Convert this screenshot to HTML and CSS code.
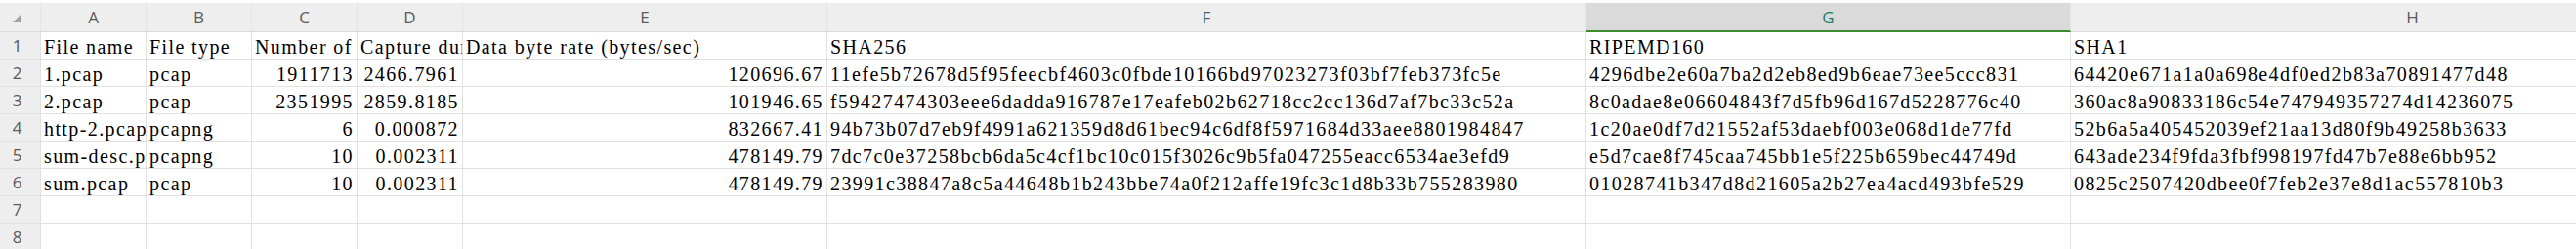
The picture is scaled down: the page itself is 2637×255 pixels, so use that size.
FILE: index.html
```html
<!DOCTYPE html>
<html lang="en">
<head>
  <meta charset="UTF-8">
  <title>capinfos - overzicht</title>
  <link rel="stylesheet" href="styles.css">
</head>
<body>
  <!-- WERKBLAD -->
  <div id="blad" class="blad"></div>

  <script>
    const kolommen = ["A","B","C","D","E","F","G","H"];
    const actieveKolom = "G";

    const rijen = [
      ["File name","File type","Number of packets","Capture duration (seconds)","Data byte rate (bytes/sec)","SHA256","RIPEMD160","SHA1"],
      ["1.pcap","pcap",1911713,"2466.7961","120696.67","11efe5b72678d5f95feecbf4603c0fbde10166bd97023273f03bf7feb373fc5e","4296dbe2e60a7ba2d2eb8ed9b6eae73ee5ccc831","64420e671a1a0a698e4df0ed2b83a70891477d48"],
      ["2.pcap","pcap",2351995,"2859.8185","101946.65","f59427474303eee6dadda916787e17eafeb02b62718cc2cc136d7af7bc33c52a","8c0adae8e06604843f7d5fb96d167d5228776c40","360ac8a90833186c54e747949357274d14236075"],
      ["http-2.pcapng","pcapng",6,"0.000872","832667.41","94b73b07d7eb9f4991a621359d8d61bec94c6df8f5971684d33aee8801984847","1c20ae0df7d21552af53daebf003e068d1de77fd","52b6a5a405452039ef21aa13d80f9b49258b3633"],
      ["sum-desc.pcapng","pcapng",10,"0.002311","478149.79","7dc7c0e37258bcb6da5c4cf1bc10c015f3026c9b5fa047255eacc6534ae3efd9","e5d7cae8f745caa745bb1e5f225b659bec44749d","643ade234f9fda3fbf998197fd47b7e88e6bb952"],
      ["sum.pcap","pcap",10,"0.002311","478149.79","23991c38847a8c5a44648b1b243bbe74a0f212affe19fc3c1d8b33b755283980","01028741b347d8d21605a2b27ea4acd493bfe529","0825c2507420dbee0f7feb2e37e8d1ac557810b3"]
    ];
    const legeRijen = 3;

    // Getallen rechts uitlijnen, zoals in een rekenblad
    function isGetal(w) {
      return typeof w === "number" || /^\d+(\.\d+)?$/.test(w);
    }

    function toonBlad() {
      // Kolomkoppen
      let html = `<div class="rij kop"><div class="cel hoek"><div class="driehoek"></div></div>`;
      html += kolommen.map(k => `<div class="cel${k === actieveKolom ? ' actief' : ''}">${k}</div>`).join('');
      html += `</div>`;

      // Rijen met gegevens
      rijen.forEach((rij, i) => {
        html += `<div class="rij"><div class="cel nr">${i + 1}</div>`;
        html += rij.map(w => `<div class="cel${isGetal(w) ? ' getal' : ''}">${w}</div>`).join('');
        html += `</div>`;
      });

      // Lege rijen onderaan
      for (let i = 0; i < legeRijen; i++) {
        html += `<div class="rij"><div class="cel nr">${rijen.length + i + 1}</div>`;
        html += kolommen.map(() => `<div class="cel"></div>`).join('');
        html += `</div>`;
      }

      document.getElementById("blad").innerHTML = html;
    }

    toonBlad();
  </script>
</body>
</html>
```

FILE: styles.css
```css
body {
  margin: 0;
  background: #fff;
  overflow: hidden;
  font-family: "Liberation Serif", "Times New Roman", serif;
  color: #000;
}
.blad {
  padding-top: 3px;
  width: 2820px;
}
.rij {
  display: grid;
  grid-template-columns: 42px 108px 108px 108px 108px 373px 777px 496px 700px;
  height: 28px;
}
.cel {
  border-right: 1px solid #e2e2e2;
  border-bottom: 1px solid #e2e2e2;
  padding: 3px 3px 0 3px;
  font-size: 20px;
  line-height: 24px;
  letter-spacing: 1.4px;
  white-space: nowrap;
  overflow: hidden;
}
.cel.getal {
  text-align: right;
  padding-right: 3px;
}

/* kolomkoppen en rijnummers */
.kop { height: 30px; }
.kop .cel {
  background: #eeeeee;
  border-right-color: #e4e4e4;
  border-bottom-color: #d9d9d9;
  padding: 0;
  font-family: "Open Sans", "Noto Sans", sans-serif;
  font-size: 17px;
  line-height: 30px;
  letter-spacing: 0;
  color: #5a5a5a;
  text-align: center;
}
.kop .cel.actief {
  background: #dadada;
  border-bottom: 2px solid #3e8b2f;
  color: #1e7d6b;
}
.kop .cel.hoek {
  padding: 12px 0 0 13px;
}
.driehoek {
  width: 0;
  height: 0;
  border-left: 8px solid transparent;
  border-bottom: 8px solid #a2a2a2;
}
.cel.nr {
  background: #eeeeee;
  padding: 0 6px 0 0;
  font-family: "Open Sans", "Noto Sans", sans-serif;
  font-size: 17px;
  line-height: 27px;
  letter-spacing: 0;
  color: #5a5a5a;
  text-align: center;
}
```
